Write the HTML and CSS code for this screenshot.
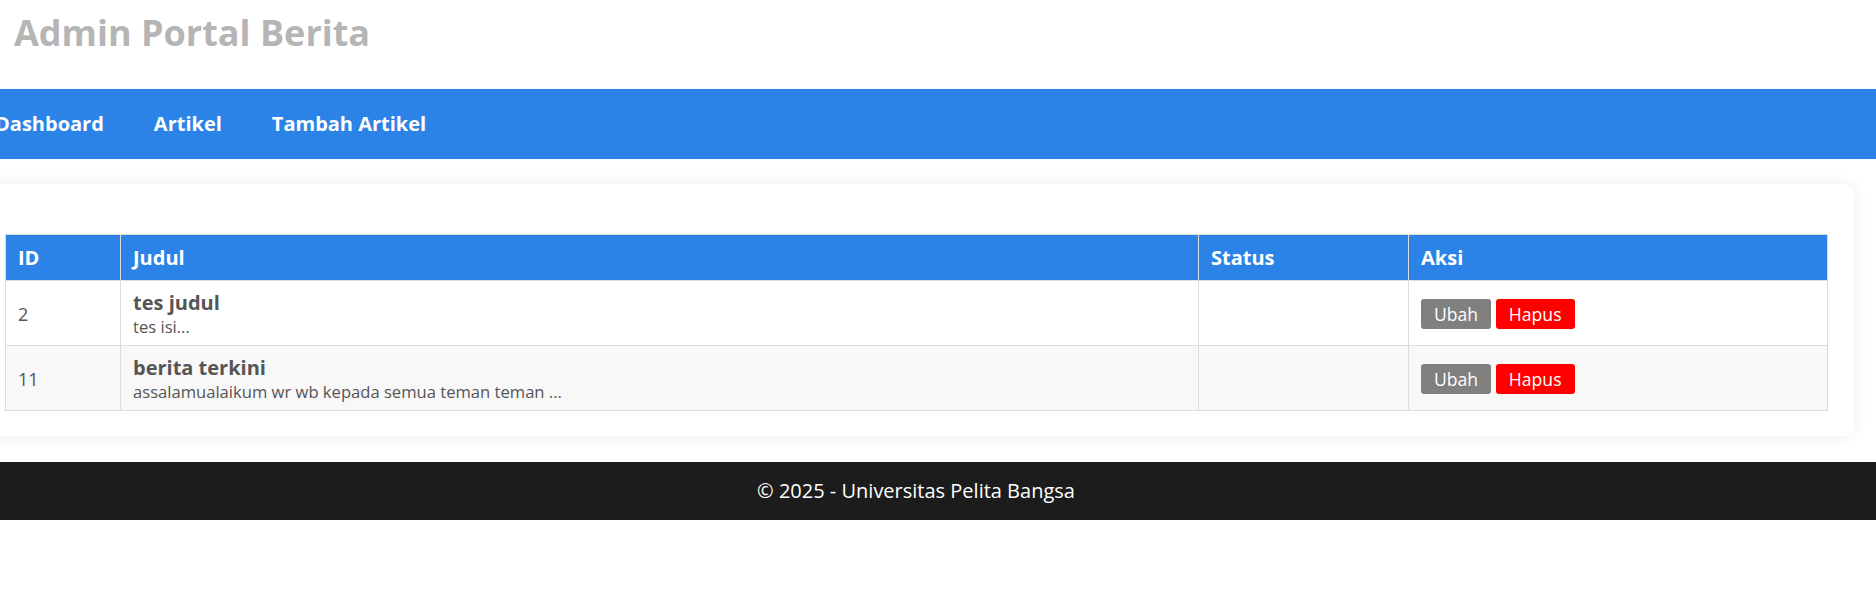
FILE: index.html
```html
<!DOCTYPE html>
<html lang="id">
<head>
<meta charset="utf-8">
<title>Admin Portal Berita</title>
<link rel="stylesheet" href="styles.css">
</head>
<body>
<div class="page">
  <header class="header">
    <h1 class="brand">Admin Portal Berita</h1>
  </header>
  <nav class="nav">
    <a class="nav-link" href="#">Dashboard</a>
    <a class="nav-link" href="#">Artikel</a>
    <a class="nav-link" href="#">Tambah Artikel</a>
  </nav>
  <main class="main">
    <section class="card">
      <table class="table">
        <thead>
          <tr>
            <th class="col-id">ID</th>
            <th class="col-judul">Judul</th>
            <th class="col-status">Status</th>
            <th class="col-aksi">Aksi</th>
          </tr>
        </thead>
        <tbody>
          <tr>
            <td>2</td>
            <td><div class="post-title">tes judul</div><div class="post-excerpt">tes isi...</div></td>
            <td></td>
            <td><a class="btn btn-edit" href="#">Ubah</a> <a class="btn btn-delete" href="#">Hapus</a></td>
          </tr>
          <tr class="striped">
            <td>11</td>
            <td><div class="post-title">berita terkini</div><div class="post-excerpt">assalamualaikum wr wb kepada semua teman teman ...</div></td>
            <td></td>
            <td><a class="btn btn-edit" href="#">Ubah</a> <a class="btn btn-delete" href="#">Hapus</a></td>
          </tr>
        </tbody>
      </table>
    </section>
  </main>
  <footer class="footer">© 2025 - Universitas Pelita Bangsa</footer>
</div>
</body>
</html>
```
FILE: styles.css
```css
html, body {
  margin: 0;
  padding: 0;
  overflow-x: hidden;
  background: #ffffff;
}
body {
  font-family: "Open Sans", "Liberation Sans", sans-serif;
  font-size: 16px;
  color: #555555;
}
.page {
  width: 1876px;
  margin-left: -22px;
}
.header {
  padding: 8px 36px 32px;
}
.brand {
  margin: 0;
  font-size: 36px;
  font-weight: 700;
  line-height: 49px;
  color: #b5b5b5;
}
.nav {
  display: flex;
  background: #2b83e8;
  margin-left: -8px;
  margin-right: -22px;
}
.nav-link {
  display: block;
  padding: 22px 25px;
  line-height: 26px;
  font-size: 20px;
  font-weight: 700;
  color: #ffffff;
  text-decoration: none;
}
.main {
  padding: 25px 0 26px;
}
.card {
  background: #ffffff;
  border-radius: 10px;
  box-shadow: 0 0 16px rgba(0, 0, 0, 0.08);
  padding: 50px 26px 25px 27px;
}
.table {
  width: 100%;
  border-collapse: collapse;
}
.table th,
.table td {
  border: 1px solid #dddddd;
  text-align: left;
  vertical-align: middle;
}
.table th {
  background: #2b83e8;
  color: #ffffff;
  font-size: 20px;
  font-weight: 700;
  line-height: 25px;
  padding: 10px 12px;
}
.table td {
  padding: 8px 12px 7px;
  font-size: 18px;
  line-height: 24px;
  color: #555555;
}
.col-id { width: 90px; }
.col-status { width: 185px; }
.col-aksi { width: 394px; }
.striped td {
  background: #f8f8f8;
}
.post-title {
  font-size: 20px;
  font-weight: 700;
  line-height: 27px;
  color: #555555;
}
.post-excerpt {
  font-size: 16.6px;
  line-height: 22px;
  color: #555555;
}
.btn {
  display: inline-block;
  padding: 3px 13px;
  font-size: 17.6px;
  line-height: 24px;
  color: #ffffff;
  text-decoration: none;
  border-radius: 3px;
}
.btn-edit { background: #808080; }
.btn-delete { background: #ff0000; }
.footer {
  background: #1c1c1c;
  color: #ffffff;
  text-align: center;
  font-size: 20px;
  line-height: 28px;
  padding: 15px 0;
  margin-right: -22px;
  padding-right: 22px;
}
```
